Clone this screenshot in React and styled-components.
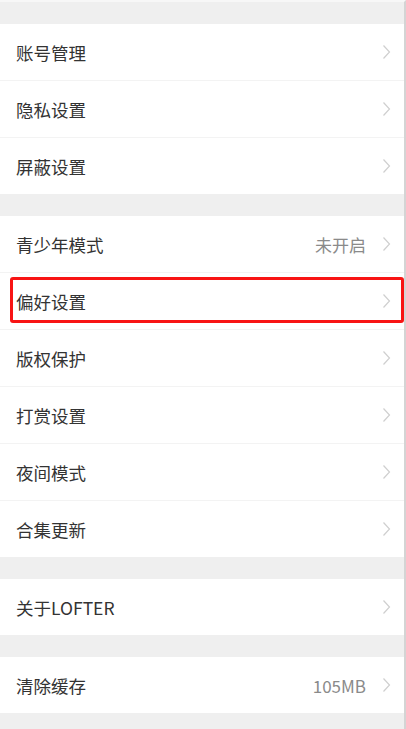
import React from 'react';
import styled, { createGlobalStyle } from 'styled-components';

// * =================================
// *       Settings-Page
// * =================================

const sections = [
  [{ label: '账号管理' }, { label: '隐私设置' }, { label: '屏蔽设置' }],
  [
    { label: '青少年模式', value: '未开启' },
    { label: '偏好设置', marked: true },
    { label: '版权保护' },
    { label: '打赏设置' },
    { label: '夜间模式' },
    { label: '合集更新' },
  ],
  [{ label: '关于LOFTER' }],
  [{ label: '清除缓存', value: '105MB' }],
];

const Chevron = () => (
  <svg width="9" height="16" viewBox="0 0 9 16">
    <path d="M1.5 1.5 L7.5 8 L1.5 14.5" fill="none" stroke="#cfcfcf" strokeWidth="1.2" />
  </svg>
);

const App = () => {
  return (
    <>
      <GlobalStyle />
      <Page>
        {sections.map((rows, i) => (
          <Section key={i}>
            {rows.map((row) => (
              <Row key={row.label}>
                <Label>{row.label}</Label>
                {row.value && <Value>{row.value}</Value>}
                <Arrow>
                  <Chevron />
                </Arrow>
                {row.marked && <Highlight />}
              </Row>
            ))}
          </Section>
        ))}
      </Page>
    </>
  );
};

//=================================
//       Styled-Component
//=================================

const GlobalStyle = createGlobalStyle`
  html, body {
    margin: 0;
    padding: 0;
    background: #efefef;
  }
  body {
    font-family: "Noto Sans CJK SC", "Noto Sans", Roboto, sans-serif;
  }
`;

const Page = styled.div`
  min-height: 729px;
  background: #efefef;
  padding-top: 22px;
  border-top: 2px solid #f7f7f7;
  box-sizing: border-box;
  border-right: 2px solid #d4d4d4;
  display: flex;
  flex-direction: column;
  gap: 22px;
`;

const Section = styled.div`
  background: #fff;
  display: flex;
  flex-direction: column;
`;

const Row = styled.div`
  position: relative;
  height: 56px;
  display: flex;
  align-items: center;
  padding: 0 13px 0 16px;
  border-bottom: 1px solid #f3f3f3;
  &:last-child {
    border-bottom: none;
  }
`;

const Label = styled.span`
  flex: 1;
  font-size: 17.5px;
  color: #333;
`;

const Value = styled.span`
  font-size: 17px;
  color: #8a8a8a;
  margin-right: 16px;
`;

const Arrow = styled.span`
  display: flex;
  align-items: center;
`;

const Highlight = styled.div`
  position: absolute;
  left: 10px;
  right: 0;
  top: 4px;
  bottom: 6px;
  border: 3px solid #f81414;
  border-radius: 3px;
  pointer-events: none;
`;

export default App;
